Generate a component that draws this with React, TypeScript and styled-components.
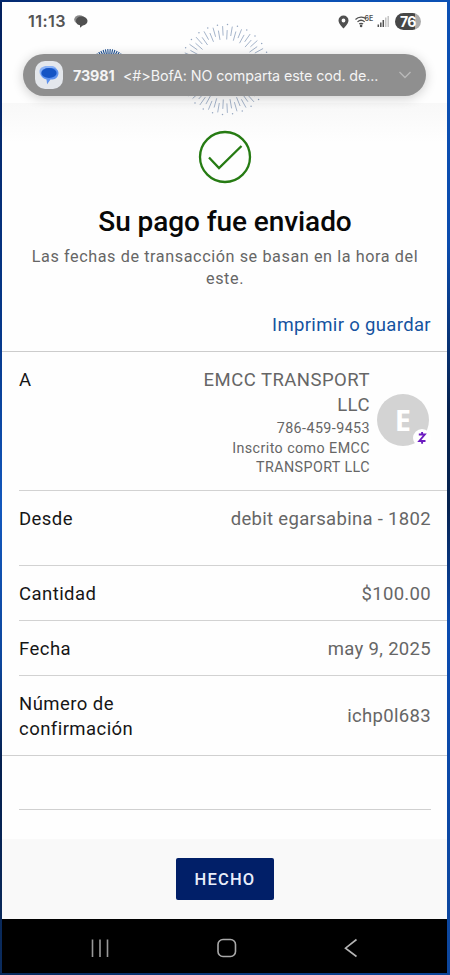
import React from "react";
import styled, { createGlobalStyle, css } from "styled-components";

const GlobalStyle = createGlobalStyle`
  * { box-sizing: border-box; }
  html, body { margin: 0; padding: 0; }
  body { font-family: Roboto, "Liberation Sans", sans-serif; background: #fff; }
`;

const Frame = styled.div`
  width: 450px;
  height: 975px;
  padding: 2px 2px 2px;
  overflow: hidden;
  background:
    linear-gradient(90deg, #03286e, #0b50b4 50%, #0b50b4) top / 100% 2px no-repeat,
    linear-gradient(90deg, #082a5c, #0d469c) bottom / 100% 2px no-repeat,
    linear-gradient(#03205c, #06398c 35%, #1358bd 52%, #0d469c 68%, #05204f 78%, #0b2c5e) left / 3px 100% no-repeat,
    linear-gradient(#0b50b4, #0b4cae 25%, #06224f 42%, #06224f 52%, #0a4bb0 64%, #0d469c) right / 3px 100% no-repeat;
`;

const Screen = styled.main`
  width: 445px;
  height: 971px;
  display: flex;
  flex-direction: column;
  background: #fefefe;
`;

const TopArea = styled.header`
  position: relative;
  flex: none;
  height: 101px;
`;

const Rays = styled.svg`
  position: absolute;
  left: 78px;
  top: 18px;
`;

const StatusBar = styled.div`
  display: flex;
  justify-content: space-between;
  align-items: center;
  height: 38px;
  padding: 0 26px 0 26px;
  color: #555;
`;

const StatusGroup = styled.div`
  display: flex;
  align-items: center;
`;

const Clock = styled.span`
  width: 46px;
  font: 600 16.2px Inter, sans-serif;
  letter-spacing: 0.4px;
`;

const Battery = styled.span`
  width: 26px;
  height: 17px;
  margin-left: 1px;
  padding-left: 5px;
  border-radius: 9px;
  background: linear-gradient(90deg, #474747 76%, #aaa 76%);
  color: #fff;
  font: 700 14px/17px Inter, sans-serif;
  letter-spacing: -0.6px;
`;

const Notification = styled.div`
  position: absolute;
  left: 21px;
  top: 52px;
  width: 403px;
  height: 42px;
  display: flex;
  align-items: center;
  padding: 0 14px 0 12px;
  border-radius: 21px;
  background: #8f8f8f;
  box-shadow: 0 2px 12px rgba(0, 0, 0, 0.2);
  color: #f4f4f4;
  font: 400 14.3px Inter, sans-serif;
  white-space: nowrap;
`;

const AppBadge = styled.span`
  display: grid;
  place-items: center;
  flex: none;
  width: 28px;
  height: 28px;
  border-radius: 10px;
  background: #e4e7ec;
`;

const Sender = styled.strong`
  width: 50px;
  margin-left: 10px;
  font-weight: 700;
  letter-spacing: -0.1px;
`;

const Message = styled.span`
  flex: 1;
  letter-spacing: -0.1px;
`;

const Confirmation = styled.section`
  flex: none;
  height: 248px;
  display: flex;
  flex-direction: column;
  align-items: center;
  padding: 27px 16px 0 17px;
  background: linear-gradient(#f8f8f8, #fefefe 40px);
`;

const Title = styled.h1`
  margin: 20px 0 0;
  font-size: 28px;
  line-height: 36px;
  font-weight: 500;
  letter-spacing: -0.08px;
  color: #080808;
`;

const Subtitle = styled.p`
  margin: 6px 0 0;
  color: #666;
  font-size: 16.2px;
  line-height: 22px;
  letter-spacing: 0.59px;
  text-align: center;
`;

const PrintLink = styled.a`
  align-self: flex-end;
  margin-top: 22px;
  font-size: 18.5px;
  line-height: 26px;
  letter-spacing: 0.35px;
  color: #1553a0;
`;

const Details = styled.dl`
  flex: none;
  margin: 0;
  height: 405px;
  border-top: 1px solid #ccc;
  border-bottom: 1px solid #d0d0d0;
`;

const Row = styled.div<{ $h: number; $top?: boolean; $last?: boolean }>`
  display: flex;
  justify-content: space-between;
  align-items: ${(p) => (p.$top ? "flex-start" : "center")};
  height: ${(p) => p.$h}px;
  margin-left: 17px;
  padding: ${(p) => (p.$top ? 16 : 2)}px 16px 0 0;
  ${(p) => !p.$last && css`border-bottom: 1px solid #d2d2d2;`}
`;

const Label = styled.dt`
  width: 140px;
  font-size: 18.5px;
  line-height: 25px;
  letter-spacing: 0.45px;
  color: #161616;
`;

const Value = styled.dd`
  margin: 0;
  font-size: 18.5px;
  line-height: 25px;
  letter-spacing: 0.32px;
  color: #666;
  text-align: right;
`;

const Payee = styled(Value)`
  display: flex;
  align-items: center;
  gap: 7px;
  margin-right: 2px;
  letter-spacing: 0.48px;
`;

const PayeeText = styled.div`
  width: 180px;
`;

const Small = styled.div<{ $lh: number }>`
  font-size: 14.3px;
  line-height: ${(p) => p.$lh}px;
  letter-spacing: 0.42px;
`;

const Avatar = styled.div`
  position: relative;
  flex: none;
  display: grid;
  place-items: center;
  width: 52px;
  height: 52px;
  margin-top: -5px;
  border-radius: 50%;
  background: #d3d3d3;
  color: #fff;
  font: 700 29px/48px "Open Sans", sans-serif;
`;

const ZelleBadge = styled.svg`
  position: absolute;
  right: -2px;
  bottom: -1px;
`;

const Blank = styled.div`
  flex: none;
  height: 54px;
  margin: 0 16px 0 17px;
  border-bottom: 1px solid #d0d0d0;
`;

const Footer = styled.footer`
  flex: none;
  display: flex;
  justify-content: center;
  height: 80px;
  margin-top: 29px;
  padding-top: 19px;
  background: #f9f9f9;
`;

const DoneButton = styled.button`
  width: 98px;
  height: 42px;
  padding: 1px 0 0 1px;
  border: 0;
  border-radius: 2px;
  background: #011f68;
  color: #e8edfa;
  font: 500 16.5px Roboto, sans-serif;
  letter-spacing: 1.2px;
`;

const NavBar = styled.nav`
  flex: 1;
  display: flex;
  justify-content: space-between;
  padding: 19px 88px 0 88px;
  background: #000;
`;

const rays = (cx: number, cy: number, r1: number, r2: number, n: number, stagger: number) =>
  Array.from({ length: n }, (_, i) => {
    const a = ((i + 0.5) / n) * Math.PI * 2;
    const start = r1 + (i % 2) * stagger;
    const end = r2 - ((i + 1) % 2) * stagger;
    return `M${(cx + Math.cos(a) * start).toFixed(1)} ${(cy + Math.sin(a) * start).toFixed(1)}L${(cx + Math.cos(a) * end).toFixed(1)} ${(cy + Math.sin(a) * end).toFixed(1)}`;
  }).join("");

const dots = (cx: number, cy: number, r: number, n: number) =>
  Array.from({ length: n }, (_, i) => {
    const a = ((i + 0.25) / n) * Math.PI * 2;
    return <circle key={i} cx={cx + Math.cos(a) * r} cy={cy + Math.sin(a) * r} r=".75" />;
  });

function Fireworks() {
  return (
    <Rays width="200" height="100" viewBox="80 20 200 100">
      <path d={rays(109, 67.5, 12, 18.5, 48, 0)} stroke="#1d4f91" strokeWidth="1.1" />
      <path d={rays(225, 69.5, 30, 43.5, 56, 4)} stroke="#9bacc4" strokeWidth=".9" />
      <g fill="#94a6c0">{dots(225, 69.5, 45, 28)}</g>
    </Rays>
  );
}

export default function App() {
  return (
    <>
      <GlobalStyle />
      <Frame>
        <Screen>
          <TopArea>
            <StatusBar>
              <StatusGroup>
                <Clock>11:13</Clock>
                <svg width="14" height="13" viewBox="0 0 14 13">
                  <ellipse cx="5.5" cy="4.5" rx="5.3" ry="4.3" fill="#888" />
                  <path d="M7.500 1.500c3.400 0 6 1.900 6 4.500s-2.200 4.200-4.700 4.400L6 12.800v-2.500C3.500 10 2 8.300 2 6c0-2.600 2.300-4.500 5.500-4.500Z" fill="#505050" />
                </svg>
              </StatusGroup>
              <StatusGroup>
                <svg width="57" height="17" viewBox="-1 0 57 17" fill="none">
                  <path d="M5.500 2.500a5 5 0 0 0-5 5c0 3.400 5 8 5 8s5-4.600 5-8a5 5 0 0 0-5-5Zm0 3.100a1.900 1.900 0 1 1 0 3.800 1.900 1.900 0 0 1 0-3.800Z" fill="#505050" />
                  <path d="M17.500 6.500c3.100-3 8-3 10.800-.6M19.500 8.900c2.200-2 5-2 7.200 0M21.200 11.100c1.200-1 2.700-1 3.900 0" stroke="#505050" strokeWidth="1.250" />
                  <circle cx="23.100" cy="12.900" r="1.300" fill="#505050" />
                  <text x="26.500" y="7.600" fontFamily="Inter" fontSize="7" fontWeight="600" fill="#505050">6E</text>
                  <path d="M40.300 11.500v2.500M42.800 9.500v4.500M45.300 7v7" stroke="#505050" strokeWidth="1.500" />
                  <path d="M47.800 4.500V14M50.200 3v11" stroke="#bbb" strokeWidth="1.300" />
                </svg>
                <Battery>76</Battery>
              </StatusGroup>
            </StatusBar>
            <Fireworks />
            <Notification>
              <AppBadge>
                <svg width="20" height="20" viewBox="0 0 20 20">
                  <path d="M8 1h4c3.500 0 6 2 6 4.800H8C4.500 5.800 3 8 3 11.500 1.200 10.300.5 8.500.5 6.500.5 3.300 3.500 1 8 1Z" fill="#8bb2f6" />
                  <path d="M9.500 3h4c3.500 0 6 2 6 5s-2.500 6.500-6 6.500h-2l-3.400 4.800-.6-4.900C4.300 13.800 2 12 2 9c0-3.500 3-6 7.500-6Z" fill="#5e92ee" />
                  <ellipse cx="10" cy="8" rx="7.600" ry="5" fill="#1454c4" />
                </svg>
              </AppBadge>
              <Sender>73981</Sender>
              <Message>&lt;#&gt;BofA: NO comparta este cod. de...</Message>
              <svg width="14" height="10" viewBox="0 0 14 10" fill="none">
                <path d="m1.500 2 5.500 5.500L12.500 2" stroke="#b9b9b9" strokeWidth="1.400" />
              </svg>
            </Notification>
          </TopArea>

          <Confirmation>
            <svg width="54" height="54" viewBox="0 0 54 54" fill="none" stroke="#267b13">
              <circle cx="27" cy="27" r="25" strokeWidth="2.300" />
              <path d="m11 27.500 10 10.500L43.500 16" strokeWidth="2.300" />
            </svg>
            <Title>Su pago fue enviado</Title>
            <Subtitle>Las fechas de transacción se basan en la hora del<br />este.</Subtitle>
            <PrintLink>Imprimir o guardar</PrintLink>
          </Confirmation>

          <Details>
            <Row $h={139} $top>
              <Label>A</Label>
              <Payee>
                <PayeeText>
                  EMCC TRANSPORT<br />LLC
                  <Small $lh={21}>786-459-9453</Small>
                  <Small $lh={19}>Inscrito como EMCC<br />TRANSPORT LLC</Small>
                </PayeeText>
                <Avatar>
                  E
                  <ZelleBadge width="18" height="18" viewBox="0 0 18 18" fill="none">
                    <circle cx="9" cy="9" r="9" fill="#fff" />
                    <path d="M5.800 5.500h6L6.300 12h6.200M9.100 3v2.500M9.100 12v2.800" stroke="#6c1cc0" strokeWidth="1.900" />
                  </ZelleBadge>
                </Avatar>
              </Payee>
            </Row>
            <Row $h={75} $top>
              <Label>Desde</Label>
              <Value>debit egarsabina - 1802</Value>
            </Row>
            <Row $h={55}>
              <Label>Cantidad</Label>
              <Value>$100.00</Value>
            </Row>
            <Row $h={55}>
              <Label>Fecha</Label>
              <Value>may 9, 2025</Value>
            </Row>
            <Row $h={79} $last>
              <Label>Número de confirmación</Label>
              <Value>ichp0l683</Value>
            </Row>
          </Details>
          <Blank />

          <Footer>
            <DoneButton>HECHO</DoneButton>
          </Footer>
          <NavBar>
            <svg width="20" height="20" viewBox="0 0 20 20">
              <path d="M2.500 1.500v17.500M10 1.500v17.500M17.500 1.500v17.500" stroke="#999" strokeWidth="1.600" />
            </svg>
            <svg width="20" height="20" viewBox="1.500 0 20 20" fill="none">
              <rect x="2.500" y="1.500" width="17.500" height="17" rx="5" stroke="#aaa" strokeWidth="1.600" />
            </svg>
            <svg width="16" height="20" viewBox="0 0 16 20" fill="none">
              <path d="m13.500 1.500-11 8.700 11 8.300" stroke="#b5b5b5" strokeWidth="1.600" />
            </svg>
          </NavBar>
        </Screen>
      </Frame>
    </>
  );
}
